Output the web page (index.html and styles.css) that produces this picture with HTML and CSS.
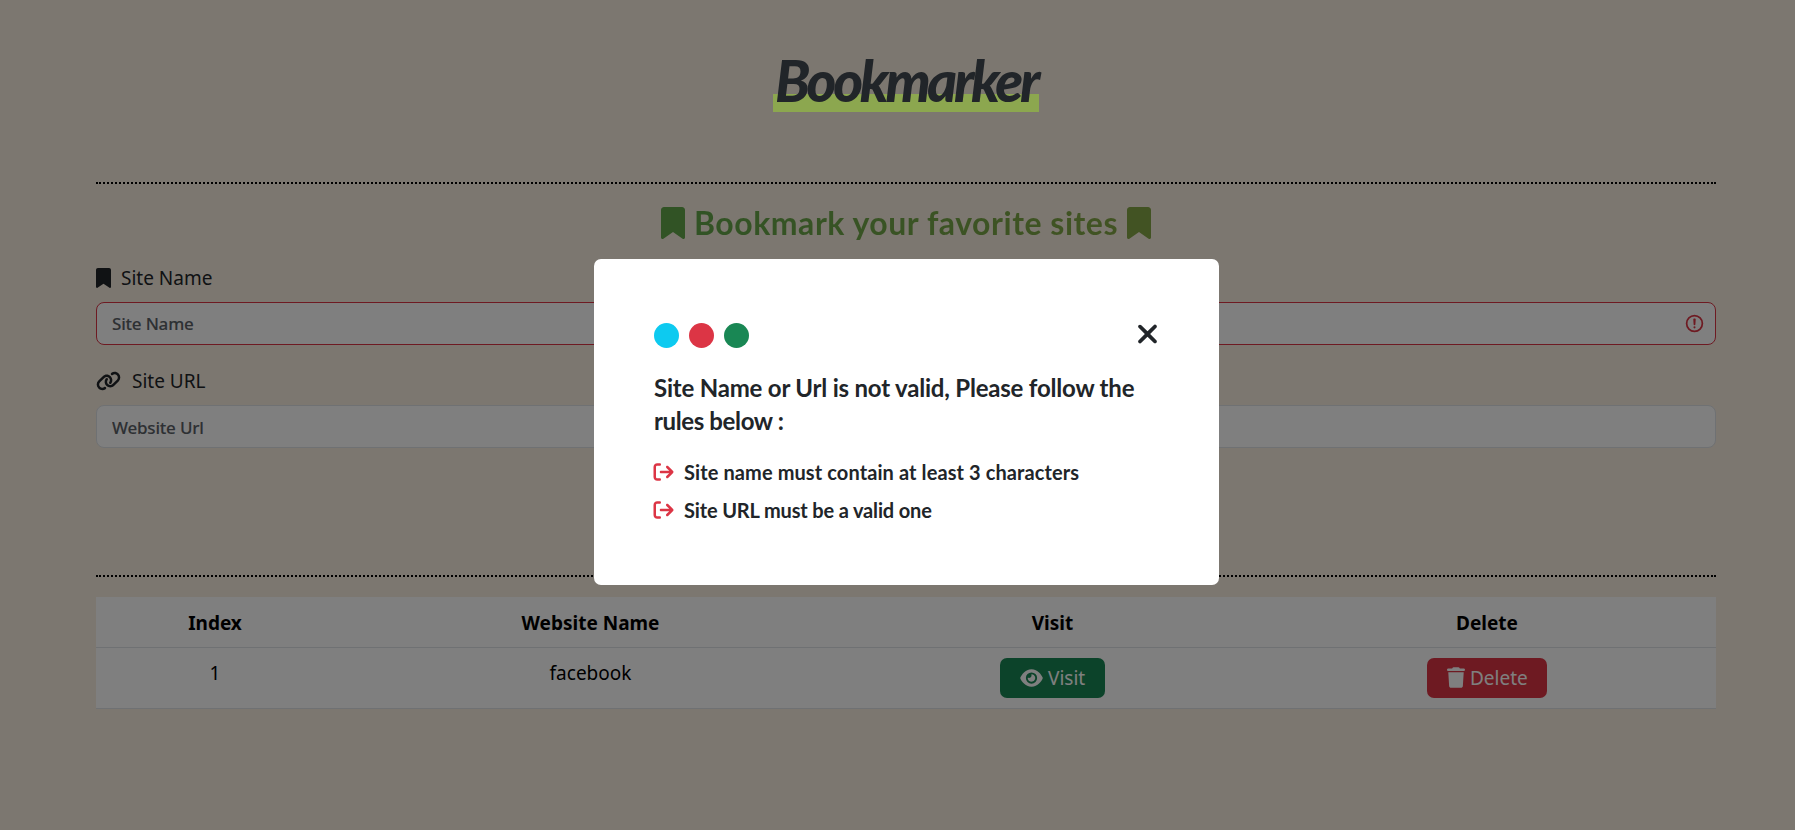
FILE: index.html
```html
<!DOCTYPE html>
<html lang="en">
<head>
<meta charset="utf-8">
<title>Bookmarker</title>
<link rel="stylesheet" href="styles.css">
</head>
<body>
<svg class="sprite" aria-hidden="true">
  <symbol id="bookmark" viewBox="0 0 384 512"><path d="M0 48V487.7C0 501.1 10.9 512 24.3 512c5 0 9.9-1.5 14-4.4L192 400 345.7 507.6c4.1 2.9 9 4.4 14 4.4c13.4 0 24.3-10.9 24.3-24.3V48c0-26.5-21.5-48-48-48H48C21.5 0 0 21.5 0 48z"/></symbol>
  <symbol id="exit" viewBox="0 0 512 512"><path d="M502.6 278.6c12.5-12.5 12.5-32.8 0-45.3l-128-128c-12.5-12.5-32.8-12.5-45.3 0s-12.5 32.8 0 45.3L402.7 224 192 224c-17.7 0-32 14.3-32 32s14.3 32 32 32l210.7 0-73.4 73.4c-12.5 12.5-12.5 32.8 0 45.3s32.8 12.5 45.3 0l128-128zM160 96c17.7 0 32-14.3 32-32s-14.3-32-32-32L96 32C43 32 0 75 0 128L0 384c0 53 43 96 96 96l64 0c17.7 0 32-14.3 32-32s-14.3-32-32-32l-64 0c-17.7 0-32-14.3-32-32l0-256c0-17.7 14.3-32 32-32l64 0z"/></symbol>
</svg>
<main class="page">
  <header class="header"><h1 class="logo">Bookmarker</h1></header>
  <section class="form">
    <h2 class="title">
      <svg class="title-icon title-icon-start"><use href="#bookmark"/></svg>
      <span class="title-text">Bookmark your favorite sites</span>
      <svg class="title-icon title-icon-end"><use href="#bookmark"/></svg>
    </h2>
    <label class="label" for="name"><svg class="label-mark"><use href="#bookmark"/></svg><span class="label-name">Site Name</span></label>
    <div class="field invalid">
      <input class="input input-name" id="name" type="text" placeholder="Site Name">
      <svg class="alert" viewBox="0 0 12 12"><circle cx="6" cy="6" r="4.5"/><path d="M5.8 3.6h.4L6 6.5z"/><circle class="alert-dot" cx="6" cy="8.2" r=".6"/></svg>
    </div>
    <label class="label label-second" for="url"><svg class="label-link" viewBox="0 0 640 512"><path d="M579.8 267.7c56.5-56.5 56.5-148 0-204.5c-50-50-128.8-56.5-186.3-15.4l-1.6 1.1c-14.4 10.3-17.7 30.3-7.4 44.6s30.3 17.7 44.6 7.4l1.6-1.1c32.1-22.9 76-19.3 103.8 8.6c31.5 31.5 31.5 82.5 0 114L422.3 334.8c-31.5 31.5-82.5 31.5-114 0c-27.9-27.9-31.5-71.8-8.6-103.8l1.1-1.6c10.3-14.4 6.9-34.4-7.4-44.6s-34.4-6.9-44.6 7.4l-1.1 1.6C206.5 251.2 213 330 263 380c56.5 56.5 148 56.5 204.5 0L579.8 267.7zM60.2 244.3c-56.5 56.5-56.5 148 0 204.5c50 50 128.8 56.5 186.3 15.4l1.6-1.1c14.4-10.3 17.7-30.3 7.4-44.6s-30.3-17.7-44.6-7.4l-1.6 1.1c-32.1 22.9-76 19.3-103.8-8.6C74 372 74 321 105.5 289.5L217.7 177.2c31.5-31.5 82.5-31.5 114 0c27.9 27.9 31.5 71.8 8.6 103.9l-1.1 1.6c-10.3 14.4-6.9 34.4 7.4 44.6s34.4 6.9 44.6-7.4l1.1-1.6C433.5 260.8 427 182 377 132c-56.5-56.5-148-56.5-204.5 0L60.2 244.3z"/></svg><span class="label-url">Site URL</span></label>
    <div class="field">
      <input class="input input-url" id="url" type="text" placeholder="Website Url">
    </div>
  </section>
  <table class="table">
    <colgroup><col class="col-index"><col class="col-name"><col class="col-visit"><col class="col-delete"></colgroup>
    <thead><tr><th>Index</th><th>Website Name</th><th>Visit</th><th>Delete</th></tr></thead>
    <tbody><tr>
      <td>1</td>
      <td class="site">facebook</td>
      <td><button class="btn btn-visit"><svg class="eye" viewBox="0 0 576 512"><path d="M288 32c-80.8 0-145.5 36.8-192.6 80.6C48.6 156 17.3 208 2.5 243.7c-3.3 7.9-3.3 16.7 0 24.6C17.3 304 48.6 356 95.4 399.4C142.5 443.2 207.2 480 288 480s145.5-36.8 192.6-80.6c46.8-43.5 78.1-95.4 93-131.1c3.3-7.9 3.3-16.7 0-24.6c-14.9-35.7-46.2-87.7-93-131.1C433.5 68.8 368.8 32 288 32zM144 256a144 144 0 1 1 288 0 144 144 0 1 1 -288 0zm144-64c0 35.3-28.7 64-64 64c-7.1 0-13.9-1.2-20.3-3.3c-5.5-1.8-11.9 1.6-11.7 7.4c.3 6.9 1.3 13.8 3.2 20.7c13.7 51.2 66.4 81.6 117.6 67.9s81.6-66.4 67.9-117.6c-11.1-41.5-47.8-69.4-88.6-71.1c-5.8-.2-9.2 6.1-7.4 11.7c2.1 6.4 3.3 13.2 3.3 20.3z"/></svg><span>Visit</span></button></td>
      <td><button class="btn btn-delete"><svg class="trash" viewBox="0 0 448 512"><path d="M135.2 17.7L128 32H32C14.3 32 0 46.3 0 64S14.3 96 32 96H416c17.7 0 32-14.3 32-32s-14.3-32-32-32H320l-7.2-14.3C307.4 6.8 296.3 0 284.2 0H163.8c-12.1 0-23.2 6.8-28.6 17.7zM416 128H32L53.2 467c1.6 25.3 22.6 45 47.9 45H346.9c25.3 0 46.3-19.7 47.9-45L416 128z"/></svg><span>Delete</span></button></td>
    </tr></tbody>
  </table>
</main>
<div class="backdrop">
  <div class="modal" role="dialog">
    <div class="modal-head">
      <div class="dots"><span class="dot dot-info"></span><span class="dot dot-danger"></span><span class="dot dot-success"></span></div>
      <svg class="close" viewBox="0 0 384 512"><path d="M342.6 150.6c12.5-12.5 12.5-32.8 0-45.3s-32.8-12.5-45.3 0L192 210.7 86.6 105.4c-12.5-12.5-32.8-12.5-45.3 0s-12.5 32.8 0 45.3L146.7 256 41.4 361.4c-12.5 12.5-12.5 32.8 0 45.3s32.8 12.5 45.3 0L192 301.3 297.4 406.6c12.5 12.5 32.8 12.5 45.3 0s12.5-32.8 0-45.3L237.3 256 342.6 150.6z"/></svg>
    </div>
    <p class="message"><span class="message-first">Site Name or Url is not valid, Please follow the</span><br><span class="message-last">rules below :</span></p>
    <ul class="rules">
      <li class="rule"><svg class="rule-icon"><use href="#exit"/></svg><span class="rule-name">Site name must contain at least 3 characters</span></li>
      <li class="rule"><svg class="rule-icon"><use href="#exit"/></svg><span class="rule-url">Site URL must be a valid one</span></li>
    </ul>
  </div>
</div>
</body>
</html>
```
FILE: styles.css
```css
* { box-sizing: border-box; }

body {
  margin: 0;
  height: 830px;
  overflow: hidden;
  background: #f9eee0;
  color: #212529;
  font-family: "Noto Sans", sans-serif;
  font-size: 19px;
  line-height: 30px;
}

svg { display: block; flex: none; fill: currentColor; }
.sprite { position: absolute; width: 0; height: 0; }

.page { width: 1716px; padding-left: 96px; }

.header {
  display: flex;
  justify-content: center;
  height: 184px;
  padding-top: 50px;
  border-bottom: 2px dotted #000;
}

/* The logo stays bright over the backdrop. */
.logo {
  position: relative;
  z-index: 20;
  width: 266px;
  height: 62px;
  margin: 0;
  background: linear-gradient(#8ca74f, #8ca74f) 0 100% / 100% 18px no-repeat;
  font: italic 900 57px/61px Lato, sans-serif;
  letter-spacing: -3.4px;
  text-align: center;
  white-space: nowrap;
}

.form { display: flow-root; height: 393px; border-bottom: 2px dotted #000; }

.title {
  display: flex;
  align-items: center;
  width: 490px;
  height: 40px;
  margin: 19px auto 0;
  font: 700 32px/40px Lato, sans-serif;
}
.title-icon { width: 24px; height: 32px; }
.title-icon-start { color: #62a64a; margin-right: 9px; }
.title-icon-end { color: #84a646; }
.title-text {
  width: 433px;
  background: linear-gradient(90deg, #63a64a, #84a646);
  -webkit-background-clip: text;
  background-clip: text;
  color: transparent;
  letter-spacing: .52px;
  white-space: nowrap;
}

.label { display: flex; align-items: center; height: 30px; margin: 20px 0 9px; }
.label-mark { width: 15px; height: 20px; margin-right: 10px; }
.label-link { width: 25px; height: 20px; margin-right: 11px; }
.label-second { margin: 21px 0 9px; }

.field {
  display: flex;
  align-items: center;
  height: 43px;
  padding: 0 10px 0 15px;
  background: #fff;
  border: 1px solid #dee2e6;
  border-radius: 8px;
}
.invalid { border-color: #dc3545; }
.input {
  flex: 1;
  padding: 0;
  border: 0;
  outline: 0;
  background: none;
  font: 500 17px/27px "Noto Sans", sans-serif;
  letter-spacing: -.2px;
}
.input-url { padding-top: 2px; }
.input::placeholder { color: #5b6167; opacity: 1; -webkit-text-stroke: .1px #5b6167; }
.alert { width: 21px; height: 21px; fill: none; stroke: #dc3545; stroke-linejoin: round; }
.alert-dot { fill: #dc3545; stroke: none; }

.table {
  width: 1620px;
  margin-top: 20px;
  border-collapse: collapse;
  table-layout: fixed;
  background: #fff;
  color: #000;
  text-align: center;
}
.col-index { width: 238px; }
.col-name { width: 513px; }
.col-visit { width: 411px; }
.col-delete { width: 458px; }
.table th { height: 50px; padding: 3px 0 0; border-bottom: 1px solid #dee2e6; }
.table td { height: 61px; padding: 10px 0; border-bottom: 1px solid #dee2e6; vertical-align: top; }

.btn {
  display: inline-flex;
  align-items: center;
  height: 40px;
  padding: 0 20px;
  border: 0;
  border-radius: 7px;
  color: #fff;
  font: 400 19px/30px "Noto Sans", sans-serif;
  vertical-align: top;
}
.btn-visit { width: 105px; background: #198754; }
.btn-delete { width: 120px; background: #dc3545; }
.eye { width: 23px; height: 20px; margin-right: 5px; }
.trash { width: 18px; height: 21px; margin-right: 5px; }

.backdrop {
  position: fixed;
  inset: 0;
  z-index: 10;
  padding: 259px 0 0 594px;
  background: rgba(0, 0, 0, .5);
}
.modal {
  width: 625px;
  height: 326px;
  padding: 64px 60px 0;
  border-radius: 7px;
  background: #fff;
  font-family: Lato, sans-serif;
  font-weight: 700;
  white-space: nowrap;
}
.modal-head { display: flex; justify-content: space-between; height: 25px; }
.dots { display: flex; gap: 10px; }
.dot { width: 25px; height: 25px; border-radius: 50%; }
.dot-info { background: #0dcaf0; }
.dot-danger { background: #dc3545; }
.dot-success { background: #198754; }
.close { width: 23px; height: 30px; margin: -4px 0 0; }
.message { margin: 23px 0 0; font-size: 24px; line-height: 33px; }
.message-first { letter-spacing: -.2px; }
.message-last { letter-spacing: -.38px; }
.rules { margin: 20px 0 0 -1px; padding: 0; list-style: none; font-size: 20px; }
.rule { display: flex; align-items: center; height: 30px; margin-bottom: 8px; }
.rule-icon { width: 21px; height: 20px; margin-right: 10px; color: #dc3545; }
.rule-name { letter-spacing: .1px; }
.rule-url { letter-spacing: -.15px; }
```
